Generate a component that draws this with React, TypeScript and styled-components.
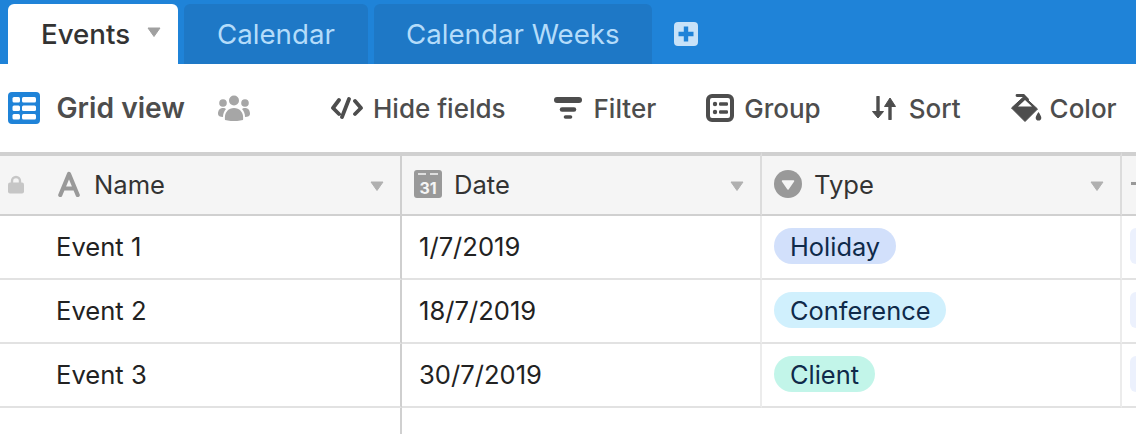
import { Fragment } from "react";
import styled, { createGlobalStyle } from "styled-components";

const GlobalStyle = createGlobalStyle`
  html, body {
    margin: 0;
    padding: 0;
    background: #fff;
    overflow: hidden;
  }
  body {
    font-family: Inter, "Liberation Sans", sans-serif;
  }
`;

const Page = styled.div`
  width: 1136px;
  height: 434px;
  overflow: hidden;
`;

const TabBar = styled.div`
  height: 64px;
  box-sizing: border-box;
  padding: 4px 0 0 8px;
  background: #1f83d8;
  display: flex;
  gap: 6px;
`;

const Tab = styled.div<{ $active?: boolean; $width: number; $pad: number }>`
  width: ${(p) => p.$width}px;
  height: 60px;
  box-sizing: border-box;
  padding-left: ${(p) => p.$pad}px;
  border-radius: 6px 6px 0 0;
  background: ${(p) => (p.$active ? "#fff" : "#1e78c6")};
  color: ${(p) => (p.$active ? "#333" : "#b4dcfa")};
  font-size: 27.7px;
  font-weight: ${(p) => (p.$active ? 500 : 400)};
  display: flex;
  align-items: center;
`;

const TabCaret = styled.svg`
  margin-left: 17px;
  margin-bottom: 4px;
`;

const AddTab = styled.svg`
  margin: 18px 0 0 16px;
`;

const Toolbar = styled.div`
  height: 88px;
  box-sizing: border-box;
  padding-left: 8px;
  display: flex;
  align-items: center;
`;

const ViewName = styled.div`
  margin-left: 16.5px;
  font-size: 28.2px;
  font-weight: 600;
  color: #4d4d4d;
`;

const ShareIcon = styled.svg`
  margin: 0 81px 0 33px;
`;

const ToolButton = styled.div<{ $gap: number; $after: number }>`
  display: flex;
  align-items: center;
  gap: ${(p) => p.$gap}px;
  margin-right: ${(p) => p.$after}px;
  font-size: 26px;
  font-weight: 500;
  color: #4d4d4d;
  white-space: nowrap;
`;

const Grid = styled.div`
  display: grid;
  grid-template-columns: 402px 360px 360px 14px;
`;

const HeaderCell = styled.div<{ $divider?: string }>`
  height: 64px;
  box-sizing: border-box;
  padding-bottom: 2px;
  border-top: 4px solid #d0d0d0;
  border-bottom: 2px solid #d0d0d0;
  border-right: ${(p) => (p.$divider ? `2px solid ${p.$divider}` : "none")};
  background: #f5f5f5;
  display: flex;
  align-items: center;
  font-size: 25.6px;
  color: #333;
  overflow: hidden;
`;

const Lock = styled.svg`
  margin: 0 34px 0 8px;
`;

const FieldIcon = styled.svg`
  margin: 0 12px 0 12px;
  flex-shrink: 0;
`;

const NameIcon = styled.svg`
  margin-right: 14px;
`;

const HeaderCaret = styled.svg`
  margin: 4px 16px 0 auto;
`;

const Cell = styled.div<{ $divider?: string; $pad: number }>`
  height: 64px;
  box-sizing: border-box;
  padding-left: ${(p) => p.$pad}px;
  padding-bottom: 2px;
  border-bottom: 2px solid #e2e2e2;
  border-right: ${(p) => (p.$divider ? `2px solid ${p.$divider}` : "none")};
  display: flex;
  align-items: center;
  font-size: 25.6px;
  color: #222;
  overflow: hidden;
`;

const Pill = styled.span<{ $bg: string }>`
  height: 36px;
  padding: 0 16px;
  border-radius: 18px;
  display: flex;
  align-items: center;
  font-size: 25.4px;
  background: ${(p) => p.$bg};
  color: #0f2a4a;
  white-space: nowrap;
`;

const NextPill = styled.span`
  width: 20px;
  height: 36px;
  border-radius: 8px 0 0 8px;
  background: #ecf1fd;
`;

const Filler = styled.div`
  height: 27px;
  margin-left: 400px;
  width: 2px;
  background: #d0d0d0;
`;

const Caret = ({ fill, as: Comp = HeaderCaret }: { fill: string; as?: typeof HeaderCaret }) => (
  <Comp width="14" height="10" viewBox="0 0 14 10">
    <path d="M1 1h12L7 9.500z" fill={fill} stroke={fill} strokeLinejoin="round" />
  </Comp>
);

const rows = [
  { name: "Event 1", date: "1/7/2019", type: "Holiday", bg: "#d2e0fb" },
  { name: "Event 2", date: "18/7/2019", type: "Conference", bg: "#d0f0fd" },
  { name: "Event 3", date: "30/7/2019", type: "Client", bg: "#c2f5e9" },
];

const App = () => (
  <Page>
    <GlobalStyle />
    <TabBar>
      <Tab $active $width={170} $pad={33}>
        Events
        <Caret fill="#a0a0a0" as={TabCaret} />
      </Tab>
      <Tab $width={184} $pad={33}>Calendar</Tab>
      <Tab $width={278} $pad={32}>Calendar Weeks</Tab>
      <AddTab width="24" height="24" viewBox="0 0 24 24">
        <rect width="24" height="24" rx="4" fill="#c8e2f8" />
        <path d="M12 4.500v15M4.500 12h15" stroke="#1f83d8" strokeWidth="4.400" />
      </AddTab>
    </TabBar>
    <Toolbar>
      <svg width="32" height="32" viewBox="0 0 32 32">
        <rect width="32" height="32" rx="4" fill="#1f83d8" />
        <g fill="#fff">
          <rect x="4.500" y="5" width="7.500" height="5.500" rx="1.500" />
          <rect x="14" y="5" width="14" height="5.500" rx="1.500" />
          <rect x="4.500" y="13.500" width="7.500" height="5.500" rx="1.500" />
          <rect x="14" y="13.500" width="14" height="5.500" rx="1.500" />
          <rect x="4.500" y="22" width="7.500" height="5.500" rx="1.500" />
          <rect x="14" y="22" width="14" height="5.500" rx="1.500" />
        </g>
      </svg>
      <ViewName>Grid view</ViewName>
      <ShareIcon width="32" height="26" viewBox="0 0 32 26" fill="#a6a6a6">
        <circle cx="16" cy="5.500" r="5" />
        <circle cx="5" cy="8" r="3.800" />
        <circle cx="27" cy="8" r="3.800" />
        <path d="M7 25c-1-7 3-12 9-12s10 5 9 12c-5 1.500-13 1.500-18 0z" />
        <path d="M0 19c0-4 2-6 5-6 1.500 0 2.500.5 3 1-2 2-3 5-3 8-3 0-5-1-5-3zM32 19c0-4-2-6-5-6-1.500 0-2.500.5-3 1 2 2 3 5 3 8 3 0 5-1 5-3z" />
      </ShareIcon>
      <ToolButton $gap={10} $after={48}>
        <svg width="32" height="22" viewBox="0 0 32 22" fill="none" stroke="#4d4d4d" strokeWidth="3.800" strokeLinecap="round" strokeLinejoin="round">
          <path d="M8 3L2 11l6 6M24 4l6 7-6 6M18 2l-7 18" />
        </svg>
        Hide fields
      </ToolButton>
      <ToolButton $gap={12} $after={50}>
        <svg width="28" height="22" viewBox="0 0 28 22" fill="none" stroke="#4d4d4d" strokeLinecap="round">
          <path d="M3 3h22" strokeWidth="6" />
          <path d="M8 12.500h12" strokeWidth="4.500" />
          <path d="M11.500 20h5" strokeWidth="3.600" />
        </svg>
        Filter
      </ToolButton>
      <ToolButton $gap={10} $after={51}>
        <svg width="28" height="28" viewBox="0 0 28 28" fill="none">
          <rect x="2" y="2" width="24" height="24" rx="4" stroke="#4d4d4d" strokeWidth="4" />
          <g fill="#4d4d4d">
            <circle cx="9" cy="10" r="2.200" />
            <circle cx="9" cy="18" r="2.200" />
            <rect x="13" y="8.200" width="9" height="3.600" rx="1.200" />
            <rect x="13" y="16.200" width="9" height="3.600" rx="1.200" />
          </g>
        </svg>
        Group
      </ToolButton>
      <ToolButton $gap={13} $after={50}>
        <svg width="24" height="24" viewBox="0 0 24 24" fill="#4d4d4d">
          <path d="M6 1v15" stroke="#4d4d4d" strokeWidth="3.400" strokeLinecap="round" />
          <path d="M18 8v15" stroke="#4d4d4d" strokeWidth="3.400" strokeLinecap="round" />
          <path d="M0.500 15.500h11L6 22zM12.500 10.500h11L18 2z" stroke="#4d4d4d" strokeLinejoin="round" />
        </svg>
        Sort
      </ToolButton>
      <ToolButton $gap={8} $after={0}>
        <svg width="31" height="28" viewBox="0 0 31 28">
          <path d="M0.500 14L13 2.500 26.500 15 14 27.500z" fill="#4d4d4d" stroke="#4d4d4d" strokeLinejoin="round" />
          <path d="M7 12.500L14 6l7 6.500z" fill="#fff" />
          <path d="M6 1.500h6.500l4 4" fill="none" stroke="#4d4d4d" strokeWidth="2.800" strokeLinecap="round" />
          <path d="M27.500 18c-1.800 2.800-2.800 4.300-2.800 5.800a2.800 2.800 0 0 0 5.600 0c0-1.500-1-3-2.800-5.800z" fill="#4d4d4d" />
        </svg>
        Color
      </ToolButton>
    </Toolbar>
    <Grid>
      <HeaderCell $divider="#cfcfcf">
        <Lock width="16" height="19" viewBox="0 0 16 19">
          <path d="M4 8V6a4 4 0 0 1 8 0v2" fill="none" stroke="#c6c6c6" strokeWidth="2.400" />
          <rect y="7.500" width="16" height="11" rx="2" fill="#c6c6c6" />
        </Lock>
        <NameIcon width="22" height="26" viewBox="0 0 22 26">
          <path d="M2.300 24L11 3l8.700 21M6 17.500h10" fill="none" stroke="#999" strokeWidth="4.200" strokeLinecap="round" strokeLinejoin="round" />
        </NameIcon>
        Name
        <Caret fill="#b0b0b0" />
      </HeaderCell>
      <HeaderCell $divider="#dcdcdc">
        <FieldIcon width="28" height="28" viewBox="0 0 28 28">
          <rect width="28" height="28" rx="3" fill="#999" />
          <path d="M4 4h8M16 4h8" stroke="#f5f5f5" strokeWidth="1.600" />
          <text x="14" y="23.500" textAnchor="middle" fontFamily="Inter, sans-serif" fontSize="16" fontWeight="700" fill="#f5f5f5">31</text>
        </FieldIcon>
        Date
        <Caret fill="#b0b0b0" />
      </HeaderCell>
      <HeaderCell $divider="#dcdcdc">
        <FieldIcon width="28" height="28" viewBox="0 0 28 28">
          <circle cx="14" cy="14" r="14" fill="#999" />
          <path d="M8.500 11h11L14 19z" fill="#f5f5f5" stroke="#f5f5f5" strokeWidth="1.500" strokeLinejoin="round" />
        </FieldIcon>
        Type
        <Caret fill="#b0b0b0" />
      </HeaderCell>
      <HeaderCell>
        <svg width="14" height="4" viewBox="0 0 14 4">
          <rect x="9" width="5" height="3" fill="#999" />
        </svg>
      </HeaderCell>
      {rows.map((row) => (
        <Fragment key={row.name}>
          <Cell $pad={56} $divider="#cfcfcf">{row.name}</Cell>
          <Cell $pad={17} $divider="#ececec">{row.date}</Cell>
          <Cell $pad={12} $divider="#ececec">
            <Pill $bg={row.bg}>{row.type}</Pill>
          </Cell>
          <Cell $pad={8}>
            <NextPill />
          </Cell>
        </Fragment>
      ))}
    </Grid>
    <Filler />
  </Page>
);

export default App;
